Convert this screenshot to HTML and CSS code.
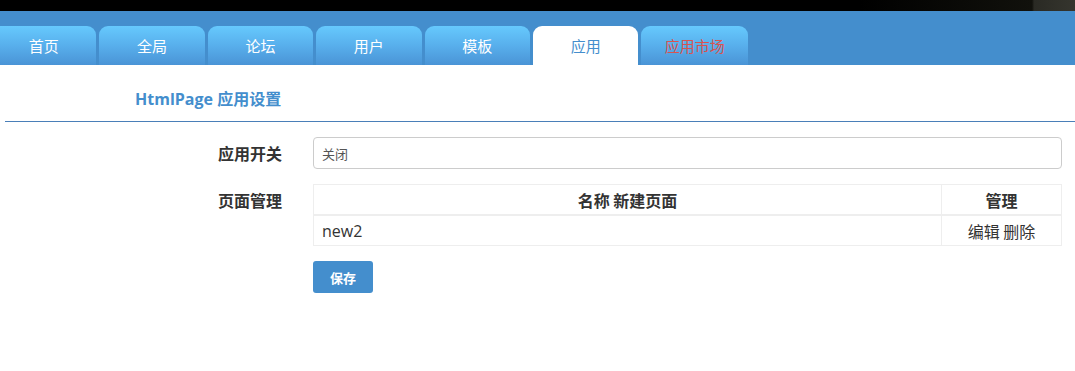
FILE: index.html
```html
<!DOCTYPE html>
<html lang="zh-CN">
<head>
    <meta charset="UTF-8">
    <title>HtmlPage 应用设置</title>
    <link rel="stylesheet" href="styles.css">
</head>
<body>
    <!-- Top strip -->
    <div class="topbar"></div>

    <!-- Tabs -->
    <div class="navbar">
        <a class="tab first" href="#">首页</a>
        <a class="tab" href="#">全局</a>
        <a class="tab" href="#">论坛</a>
        <a class="tab" href="#">用户</a>
        <a class="tab" href="#">模板</a>
        <a class="tab active" href="#">应用</a>
        <a class="tab market" href="#">应用市场</a>
    </div>

    <!-- Main Content -->
    <div class="page-title">HtmlPage 应用设置</div>

    <div class="form">
        <div class="form-row">
            <label class="form-label">应用开关</label>
            <div class="form-control">
                <select class="select">
                    <option>关闭</option>
                    <option>开启</option>
                </select>
            </div>
        </div>

        <div class="form-row top">
            <label class="form-label">页面管理</label>
            <div class="form-control">
                <table class="pages">
                    <thead>
                        <tr>
                            <th>名称 <a href="#">新建页面</a></th>
                            <th class="col-manage">管理</th>
                        </tr>
                    </thead>
                    <tbody>
                        <tr>
                            <td>new2</td>
                            <td class="col-manage"><a href="#">编辑</a> <a href="#">删除</a></td>
                        </tr>
                    </tbody>
                </table>
            </div>
        </div>

        <div class="form-row">
            <div></div>
            <div class="form-control">
                <button class="save-btn">保存</button>
            </div>
        </div>
    </div>
</body>
</html>
```

FILE: styles.css
```css
/* General Styles */
body {
    margin: 0;
    padding: 0;
    background: #fff;
    color: #333;
    font-family: "Open Sans", "Noto Sans CJK SC", sans-serif;
}

a {
    color: inherit;
    text-decoration: none;
}

/* Top strip */
.topbar {
    height: 11px;
    background: linear-gradient(to right, #000 0%, #000 80%, #11110c 96%, #2a2a24 96.2%, #35352e 100%);
}

/* Tab bar */
.navbar {
    display: flex;
    gap: 3px;
    align-items: flex-end;
    height: 54px;
    background-color: #448ecd;
    overflow: hidden;
}

.navbar .tab {
    flex: 0 0 auto;
    width: 105.4px;
    height: 39px;
    line-height: 41px;
    text-align: center;
    font-size: 15px;
    color: #fff;
    border-radius: 9px 9px 0 0;
    background: linear-gradient(to bottom, #66c9fd 0%, #58afec 50%, #4a94d6 100%);
}

.navbar .tab.first {
    margin-left: -9px;
}

.navbar .tab.active {
    background: #fff;
    color: #448ecd;
}

.navbar .tab.market {
    color: #d9534f;
    width: 107px;
}

/* Page title */
.page-title {
    padding: 21px 0 0 130px;
    margin-left: 5px;
    height: 35px;
    font-size: 16px;
    font-weight: bold;
    color: #448ecd;
    border-bottom: 1px solid #4a7fb8;
}

/* Form */
.form {
    padding: 15px 13px 0 0;
}

.form-row {
    display: grid;
    grid-template-columns: 282px 1fr;
    column-gap: 31px;
    align-items: center;
    margin-bottom: 15px;
}

.form-row.top {
    align-items: start;
}

.form-label {
    text-align: right;
    font-family: "Noto Sans CJK SC", sans-serif;
    font-size: 16px;
    font-weight: bold;
    color: #333;
}

.form-row.top .form-label {
    padding-top: 4px;
}

.select {
    box-sizing: border-box;
    width: 100%;
    height: 32px;
    padding: 0 8px;
    border: 1px solid #ccc;
    border-radius: 4px;
    background: #fff;
    font-family: "Noto Sans CJK SC", sans-serif;
    font-size: 13px;
    color: #555;
    appearance: none;
    -webkit-appearance: none;
}

/* Pages table */
.pages {
    width: 100%;
    border-collapse: collapse;
    font-family: "Noto Sans CJK SC", sans-serif;
    font-size: 16px;
    color: #333;
}

.pages th,
.pages td {
    border: 1px solid #eee;
    height: 29px;
    padding: 0 8px;
}

.pages th {
    font-weight: bold;
    text-align: center;
    border-bottom: 2px solid #eee;
}

.pages td {
    font-family: "Open Sans", "Noto Sans CJK SC", sans-serif;
}

.pages .col-manage {
    width: 103px;
    text-align: center;
    font-family: "Noto Sans CJK SC", sans-serif;
}

/* Save button */
.save-btn {
    width: 60px;
    height: 32px;
    background-color: #448ecd;
    color: #fff;
    border: none;
    border-radius: 3px;
    font-family: "Noto Sans CJK SC", sans-serif;
    font-size: 13px;
    font-weight: bold;
    cursor: pointer;
}
```
